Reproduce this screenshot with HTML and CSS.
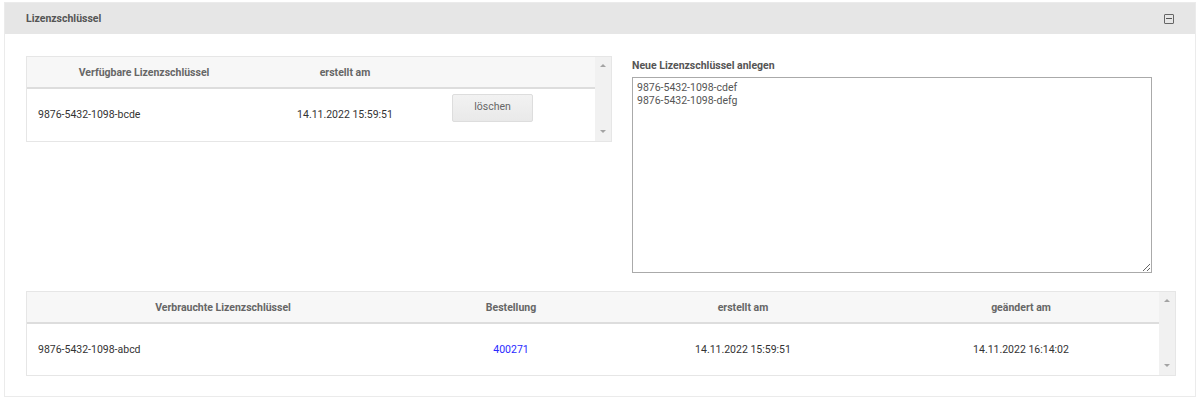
FILE: index.html
```html
<!DOCTYPE html>
<html lang="de">
<head>
    <meta charset="UTF-8">
    <title>Lizenzschlüssel</title>
    <link rel="stylesheet" href="styles.css">
</head>
<body>
    <div class="panel">
        <div class="panel-head">
            <span class="panel-title">Lizenzschlüssel</span>
            <span class="panel-toggle"></span>
        </div>
        <div class="panel-body">
            <div class="top-row">
                <div class="grid grid-free">
                    <table>
                        <thead>
                            <tr>
                                <th class="c-key">Verfügbare Lizenzschlüssel</th>
                                <th class="c-date">erstellt am</th>
                                <th></th>
                            </tr>
                        </thead>
                        <tbody>
                            <tr>
                                <td class="left">9876-5432-1098-bcde</td>
                                <td>14.11.2022 15:59:51</td>
                                <td class="left"><button class="btn">löschen</button></td>
                            </tr>
                        </tbody>
                    </table>
                    <div class="scrollbar"><span class="arrow up"></span><span class="arrow down"></span></div>
                </div>
                <div class="new-keys">
                    <label for="new-keys">Neue Lizenzschlüssel anlegen</label>
                    <textarea id="new-keys">9876-5432-1098-cdef
9876-5432-1098-defg</textarea>
                </div>
            </div>
            <div class="grid grid-used">
                <table>
                    <thead>
                        <tr>
                            <th class="u-key">Verbrauchte Lizenzschlüssel</th>
                            <th class="u-order">Bestellung</th>
                            <th class="u-created">erstellt am</th>
                            <th>geändert am</th>
                        </tr>
                    </thead>
                    <tbody>
                        <tr>
                            <td class="left">9876-5432-1098-abcd</td>
                            <td><a href="#">400271</a></td>
                            <td>14.11.2022 15:59:51</td>
                            <td>14.11.2022 16:14:02</td>
                        </tr>
                    </tbody>
                </table>
                <div class="scrollbar"><span class="arrow up"></span><span class="arrow down"></span></div>
            </div>
        </div>
    </div>
</body>
</html>
```

FILE: styles.css
```css
body {
    margin: 0;
    padding: 2px 3px 0 4px;
    font-family: Roboto, Arial, sans-serif;
    font-size: 10.5px;
    color: #333;
    background: #fff;
}
.panel {
    border: 1px solid #ebebeb;
    height: 395px;
    box-sizing: border-box;
}
.panel-head {
    height: 31px;
    background: #e6e6e6;
    display: flex;
    align-items: center;
    justify-content: space-between;
    padding: 0 21px 0 21px;
}
.panel-title {
    font-weight: bold;
    color: #555;
    margin-top: -1px;
}
.panel-toggle {
    width: 8px;
    height: 8px;
    border: 1px solid #666;
    border-radius: 1px;
    position: relative;
}
.panel-toggle::after {
    content: "";
    position: absolute;
    left: 1px;
    right: 1px;
    top: 3px;
    height: 1px;
    background: #555;
}
.panel-body {
    padding: 22px 20px 0 21px;
}
.top-row {
    display: flex;
    gap: 20px;
    align-items: flex-start;
}
.grid {
    display: flex;
    border: 1px solid #e6e6e6;
    box-sizing: border-box;
}
.grid-free {
    width: 586px;
    height: 86px;
}
.grid-used {
    width: 1150px;
    height: 85px;
    margin-top: 18px;
}
.grid table {
    flex: 1;
    border-collapse: collapse;
    table-layout: fixed;
    align-self: flex-start;
}
.grid th {
    height: 30px;
    background: #f7f7f7;
    border-bottom: 2px solid #ddd;
    color: #666;
    font-weight: bold;
    text-align: center;
    padding: 0;
}
.grid td {
    height: 51px;
    text-align: center;
    padding: 0;
}
.grid td.left {
    text-align: left;
    padding-left: 11px;
}
.c-key { width: 234px; }
.c-date { width: 168px; }
.u-key { width: 392px; }
.u-order { width: 184px; }
.u-created { width: 280px; }
.grid a {
    color: #2a2aff;
    text-decoration: none;
}
.btn {
    margin-left: 12px;
    width: 81px;
    height: 28px;
    background: linear-gradient(#f2f2f2, #e9e9e9);
    border: 1px solid #ddd;
    border-radius: 2px;
    color: #666;
    font-family: inherit;
    font-size: 10.5px;
    margin-bottom: 13px;
    padding: 0 0 3px;
}
.scrollbar {
    width: 16px;
    background: #f1f1f1;
    display: flex;
    flex-direction: column;
    justify-content: space-between;
    align-items: center;
    padding: 7px 0 8px;
}
.arrow {
    width: 0;
    height: 0;
    border-left: 3px solid transparent;
    border-right: 3px solid transparent;
}
.arrow.up { border-bottom: 3px solid #a3a3a3; }
.arrow.down { border-top: 3px solid #a3a3a3; }
.new-keys {
    display: flex;
    flex-direction: column;
    margin-top: 3px;
}
.new-keys label {
    font-weight: bold;
    color: #555;
    margin-bottom: 5px;
}
.new-keys textarea {
    width: 520px;
    height: 196px;
    box-sizing: border-box;
    border: 1px solid #aaa;
    padding: 4px 4px;
    font-family: inherit;
    font-size: 10.5px;
    color: #555;
    line-height: 12.5px;
    resize: vertical;
    margin: 0;
}
```
